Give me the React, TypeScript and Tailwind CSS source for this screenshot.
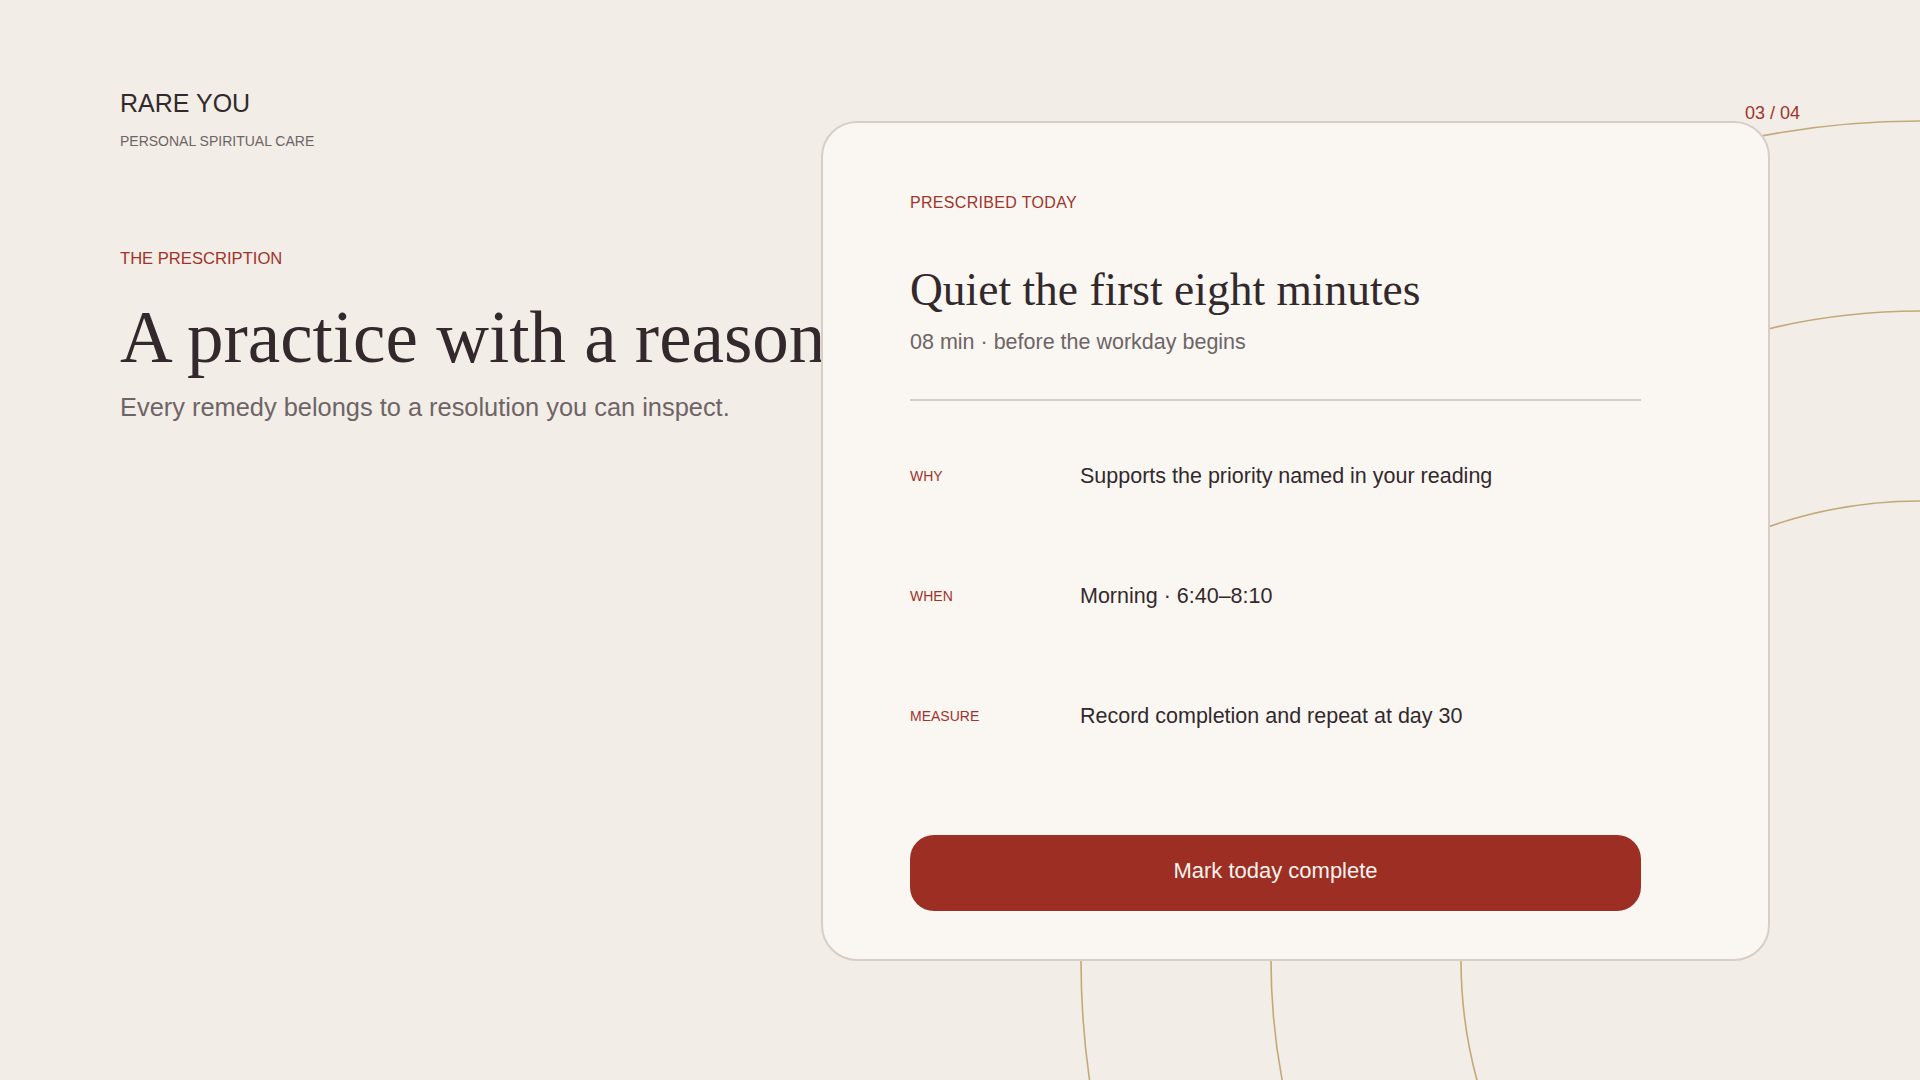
const rows = [
  { label: 'WHY', value: 'Supports the priority named in your reading' },
  { label: 'WHEN', value: 'Morning · 6:40–8:10' },
  { label: 'MEASURE', value: 'Record completion and repeat at day 30' },
];

const Rings = () => (
  <svg
    className="pointer-events-none absolute inset-0 h-full w-full"
    viewBox="0 0 1920 1080"
    preserveAspectRatio="xMidYMid slice"
    fill="none"
  >
    <circle cx="1920" cy="960" r="839" stroke="#c3a978" strokeWidth="1.6" />
    <circle cx="1920" cy="960" r="649" stroke="#c3a978" strokeWidth="1.6" />
    <circle cx="1920" cy="960" r="459" stroke="#c3a978" strokeWidth="1.6" />
  </svg>
);

const App = () => {
  return (
    <div className="relative h-[1080px] w-full overflow-hidden bg-[#f2ede7] font-['Liberation_Sans',Arial,sans-serif] text-[#33292d]">
      <Rings />

      <div className="absolute right-[120px] top-[102px] text-[18px] leading-[22px] text-[#a0332a]">
        03 / 04
      </div>

      <div className="relative flex items-start pl-[120px] pt-[88px]">
        {/* left column */}
        <div className="w-[701px] shrink-0">
          <div className="text-[25px] leading-[30px] text-[#33292d]">RARE YOU</div>
          <div className="mt-[13px] text-[14px] leading-[20px] text-[#6e6466]">
            PERSONAL SPIRITUAL CARE
          </div>

          <div className="mt-[98px] text-[16.6px] leading-[20px] text-[#a0332a]">
            THE PRESCRIPTION
          </div>
          <h1 className="mt-[29px] whitespace-nowrap font-['Liberation_Serif',serif] text-[73px] leading-[80px] text-[#33292d]">
            A practice with a reason
          </h1>
          <p className="mt-[14px] whitespace-nowrap text-[25.4px] leading-[30px] text-[#6e6466]">
            Every remedy belongs to a resolution you can inspect.
          </p>
        </div>

        {/* card */}
        <div className="relative z-10 mt-[33px] w-[949px] shrink-0 rounded-[36px] border-2 border-[#d8cec7] bg-[#faf7f3] pb-[48px] pl-[87px] pr-[127px] pt-[70px]">
          <div className="text-[16px] leading-[20px] tracking-[0.02em] text-[#a0332a]">
            PRESCRIBED TODAY
          </div>
          <h2 className="mt-[51px] font-['Liberation_Serif',serif] text-[45.5px] leading-[52px] text-[#33292d]">
            Quiet the first eight minutes
          </h2>
          <div className="mt-[12px] text-[21.5px] leading-[28px] text-[#6e6466]">
            08 min · before the workday begins
          </div>

          <div className="mt-[43px] h-[2px] w-full bg-[#d6cdc6]" />

          <div className="mt-[15px] flex flex-col">
            {rows.map((row) => (
              <div key={row.label} className="flex h-[120px] items-center">
                <div className="w-[170px] shrink-0 text-[14px] leading-[20px] text-[#a0332a]">
                  {row.label}
                </div>
                <div className="text-[21.5px] leading-[28px] text-[#33292d]">{row.value}</div>
              </div>
            ))}
          </div>

          <button
            type="button"
            className="mt-[59px] flex h-[76px] w-full items-center justify-center rounded-[24px] bg-[#9d2e23] pb-[5px] text-[22px] leading-[28px] text-[#fbf3ee]"
          >
            Mark today complete
          </button>
        </div>
      </div>
    </div>
  );
};

export default App;
